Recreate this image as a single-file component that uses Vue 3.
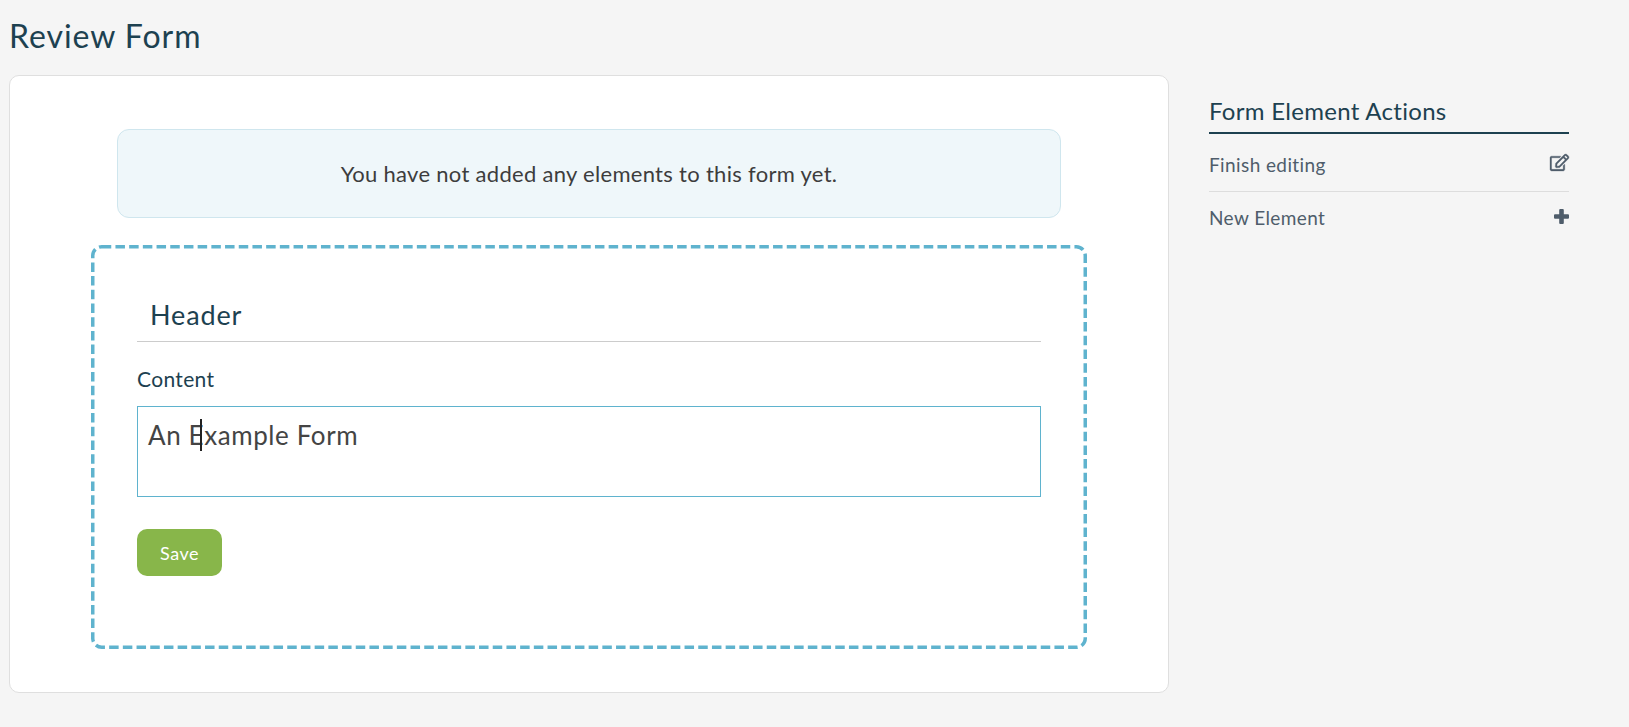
<template>
  <div class="page">
    <h1 class="title">Review Form</h1>
    <div class="layout">
      <main class="card">
        <div class="notice">You have not added any elements to this form yet.</div>

        <!-- element being edited -->
        <section class="editor">
          <svg class="dashes" width="996" height="404">
            <rect x="1.75" y="1.75" width="992.5" height="400.5" rx="9" />
          </svg>
          <input class="header-input" type="text" value="Header" readonly />
          <label class="content-label">Content</label>
          <div class="content-wrap">
            <textarea class="content-input" readonly>An Example Form</textarea>
            <span class="caret"></span>
          </div>
          <button class="save" type="button">Save</button>
        </section>
      </main>

      <aside class="actions">
        <h2 class="actions-title">Form Element Actions</h2>
        <a v-for="item in actions" :key="item.label" class="action">
          <span>{{ item.label }}</span>
          <svg :class="item.cls" :viewBox="item.box" fill="currentColor"><path :d="item.path" /></svg>
        </a>
      </aside>
    </div>
  </div>
</template>

<script setup>
const actions = [
  {
    label: 'Finish editing',
    cls: 'icon-edit',
    box: '0 0 576 512',
    path: 'M402.3 344.9l32-32c5-5 13.7-1.5 13.7 5.7V464c0 26.5-21.5 48-48 48H48c-26.5 0-48-21.5-48-48V112c0-26.5 21.5-48 48-48h273.5c7.1 0 10.7 8.6 5.7 13.7l-32 32c-1.5 1.5-3.5 2.3-5.7 2.3H48v352h352V350.5c0-2.1.8-4.1 2.3-5.6zm156.6-201.8L296.3 405.7l-90.4 10c-26.2 2.9-48.5-19.2-45.6-45.6l10-90.4L432.9 17.1c22.9-22.9 59.9-22.9 82.7 0l43.2 43.2c22.9 22.9 22.9 60 .1 82.8zM460.1 174L402 115.9 216.2 301.8l-7.3 65.3 65.3-7.3L460.1 174zm64.8-79.7l-43.2-43.2c-4.1-4.1-10.8-4.1-14.8 0L436 82l58.1 58.1 30.9-30.9c4-4.2 4-10.8-.1-14.9z'
  },
  {
    label: 'New Element',
    cls: 'icon-plus',
    box: '0 0 15 15',
    path: 'M6.2 0h2.6a1 1 0 0 1 1 1v4.2H14a1 1 0 0 1 1 1v2.6a1 1 0 0 1-1 1H9.8V14a1 1 0 0 1-1 1H6.2a1 1 0 0 1-1-1V9.8H1a1 1 0 0 1-1-1V6.2a1 1 0 0 1 1-1h4.2V1a1 1 0 0 1 1-1z'
  }
]
</script>

<style>
html, body {
  background: #f5f5f5;
}
</style>

<style scoped>
.page {
  height: 727px;
  box-sizing: border-box;
  padding: 0 60px 0 9px;
  background: #f5f5f5;
  font-family: Lato, "Open Sans", sans-serif;
  overflow: hidden;
}

.title {
  margin: 0;
  padding-top: 17px;
  height: 57px;
  box-sizing: border-box;
  font-size: 32px;
  line-height: 38px;
  font-weight: 400;
  color: #1d4150;
  letter-spacing: 0.95px;
}

.layout {
  display: flex;
  align-items: flex-start;
  gap: 40px;
  margin-top: 18px;
}

.card {
  width: 1160px;
  height: 618px;
  box-sizing: border-box;
  padding: 53px 81px 0;
  background: #fff;
  border: 1px solid #dfdfdf;
  border-radius: 10px;
}

.notice {
  margin: 0 26px;
  height: 89px;
  box-sizing: border-box;
  display: flex;
  align-items: center;
  justify-content: center;
  background: #eff7fa;
  border: 1px solid #cfe6ee;
  border-radius: 12px;
  font-size: 22px;
  color: #3d3d3d;
  letter-spacing: 0.3px;
}

.editor {
  position: relative;
  margin-top: 27px;
  height: 404px;
  box-sizing: border-box;
  padding: 43px 46px 0;
  display: flex;
  flex-direction: column;
  align-items: flex-start;
}

.dashes {
  position: absolute;
  left: 0;
  top: 0;
  pointer-events: none;
}

.dashes rect {
  fill: none;
  stroke: #5fb3ce;
  stroke-width: 3.5;
  stroke-dasharray: 9.5 4.2;
}

.header-input {
  width: 100%;
  height: 54px;
  box-sizing: border-box;
  padding: 0 13px;
  border: 0;
  border-bottom: 1px solid #ccc;
  outline: none;
  font-family: inherit;
  font-size: 27px;
  letter-spacing: 0.85px;
  color: #1d4150;
  background: transparent;
}

.content-label {
  margin-top: 24px;
  margin-bottom: -1px;
  font-size: 21px;
  line-height: 26px;
  color: #1d4150;
  letter-spacing: 0.35px;
}

.content-wrap {
  position: relative;
  width: 100%;
  margin-top: 15px;
  height: 91px;
}

.content-input {
  display: block;
  width: 100%;
  height: 100%;
  box-sizing: border-box;
  padding: 13px 10px;
  border: 1px solid #5fb3ce;
  outline: none;
  resize: none;
  font-family: inherit;
  font-size: 26px;
  line-height: 30px;
  letter-spacing: 0.6px;
  color: #444;
}

.caret {
  position: absolute;
  left: 63px;
  top: 13px;
  width: 1.5px;
  height: 32px;
  background: #222;
}

.save {
  margin-top: 32px;
  width: 85px;
  height: 47px;
  border: 0;
  border-radius: 10px;
  background: #88b64a;
  color: #fff;
  font-family: inherit;
  font-size: 18px;
  letter-spacing: 0.5px;
}

.actions {
  width: 360px;
  margin-top: 22px;
}

.actions-title {
  margin: 0 0 4px;
  height: 37px;
  box-sizing: border-box;
  border-bottom: 2px solid #1d4150;
  font-size: 24px;
  line-height: 28px;
  font-weight: 400;
  letter-spacing: 0.3px;
  color: #1d4150;
}

.action {
  display: flex;
  align-items: center;
  justify-content: space-between;
  height: 53px;
  box-sizing: border-box;
  font-size: 19px;
  color: #4f5d6b;
  letter-spacing: 0.4px;
}

.action + .action {
  border-top: 1px solid #ddd;
}

.action + .action span {
  margin-top: -2px;
}

.icon-edit {
  width: 19px;
  height: 17px;
  margin-top: -4px;
  overflow: visible;
  stroke: currentColor;
  stroke-width: 10;
}

.icon-plus {
  width: 15px;
  height: 15px;
  margin-top: -3px;
}
</style>
